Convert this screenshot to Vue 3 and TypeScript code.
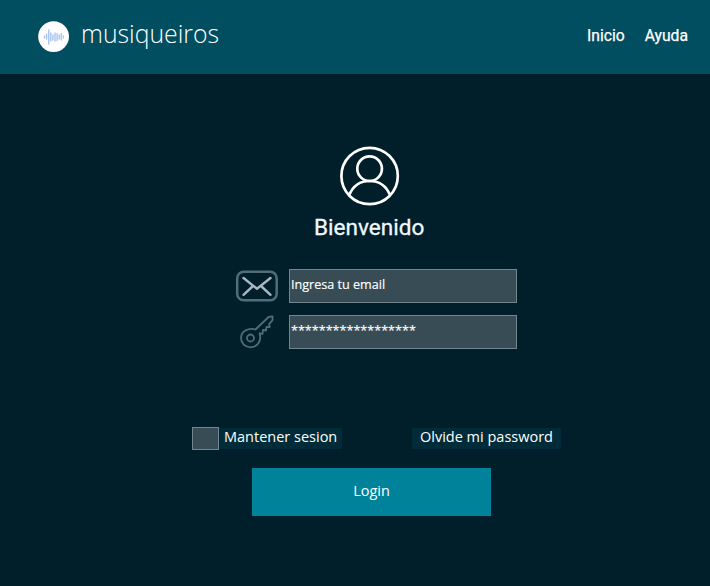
<script setup lang="ts">
import { ref } from 'vue'

const links: string[] = ['Inicio', 'Ayuda']
const email = ref('Ingresa tu email')
const password = ref('******************')
const keep = ref(false)
</script>

<template>
  <div class="page">
    <header class="bar">
      <div class="brand">
        <svg class="logo" width="32" height="32" viewBox="0 0 32 32">
          <circle cx="15.6" cy="15.6" r="15.4" fill="#fff" />
          <g stroke="#a9c3f3" stroke-width="1.4" stroke-linecap="round">
            <path d="M6.5 15v2M8.6 13v5M10.7 9v14M12.8 12v8M14.9 14v5M17 12v8M19.1 12.5v7M21.2 14v4M23.3 12.5v6.5M25.4 15v2" />
          </g>
        </svg>
        <span class="name">musiqueiros</span>
      </div>
      <nav class="nav">
        <a v-for="l in links" :key="l">{{ l }}</a>
      </nav>
    </header>
    <main class="main">
      <svg class="avatar" width="60" height="60" viewBox="0 0 60 60" fill="none" stroke="#fff" stroke-width="2.7">
        <circle cx="29.6" cy="30" r="28.2" />
        <circle cx="29.600" cy="22.700" r="12.300" />
        <path d="M9.200 49C13 40 20.500 35 29.600 35S46.200 40 50 49" />
      </svg>
      <h1 class="title">Bienvenido</h1>
      <form class="form" @submit.prevent>
        <div class="field">
          <svg class="icon" width="44" height="34" viewBox="0 0 44 34" fill="none">
            <rect x="2.200" y="2.700" width="39.500" height="28.600" rx="6.500" stroke="#526d78" stroke-width="2.500" />
            <path d="M8.500 9L22 19.800L35.500 9M8.500 25.800L18 17M35.500 25.800L26 17" stroke="#a9b8bf" stroke-width="2.400" stroke-linecap="round" />
          </svg>
          <div class="input email">{{ email }}</div>
        </div>
        <div class="field">
          <svg class="icon" width="44" height="34" viewBox="0 0 44 34" fill="none" stroke="#526c77" stroke-width="1.800" stroke-linejoin="round">
            <circle cx="15.500" cy="23" r="3.500" />
            <path d="M20.500 14.500L33.600 2L37.600 1.400L37.400 5.400L34.200 8.800L34.700 12.200L31.500 11.800L31 15.500L28 15L27.500 19L24.600 18.200C27 26 22 32.300 15.500 32.300C10.300 32.300 6 28.200 6 23C6 16.700 13 12.300 20.500 14.500Z" />
          </svg>
          <div class="input secret">{{ password }}</div>
        </div>
        <div class="options">
          <label class="keep" @click="keep = !keep">
            <span class="box"></span>
            <span class="tag keep-tag">Mantener sesion</span>
          </label>
          <a class="tag forgot">Olvide mi password</a>
        </div>
        <button class="login" type="submit">Login</button>
      </form>
    </main>
  </div>
</template>

<style>
body {
  background: #001f2b;
}
</style>

<style scoped>
.page {
  height: 586px;
  background: #001f2b;
  color: #fff;
  font-family: "Open Sans", sans-serif;
  overflow: hidden;
}
.bar {
  box-sizing: border-box;
  height: 74px;
  padding: 0 22px 0 38px;
  display: flex;
  justify-content: space-between;
  background: #004e60;
  border-bottom: 1px solid #1b464e;
}
.brand {
  display: flex;
  align-items: flex-start;
}
.logo {
  margin-top: 21px;
}
.name {
  margin: 15px 0 0 11px;
  font-size: 24.8px;
  line-height: 36px;
  font-weight: 300;
}
.nav {
  display: flex;
  gap: 20px;
  padding-top: 24px;
  font: 400 15.7px/24px Roboto, sans-serif;
  -webkit-text-stroke: 0.25px #fff;
}
.main {
  padding-top: 72px;
}
.avatar {
  display: block;
  margin-left: 340px;
}
.title {
  margin: 6px 0 0 314px;
  font: 400 22.6px/32px Roboto, sans-serif;
  color: #f0f8ff;
  -webkit-text-stroke: 0.3px #f0f8ff;
}
.form {
  padding-top: 25px;
}
.field {
  display: flex;
  gap: 10px;
  margin: 0 0 12px 235px;
  height: 34px;
}
.input {
  box-sizing: border-box;
  width: 228px;
  height: 34px;
  padding-left: 1px;
  background: #384c56;
  border: 1px solid #71868f;
  font-size: 12.6px;
  line-height: 30px;
  white-space: nowrap;
  -webkit-text-stroke: 0.15px #fff;
}
.options {
  display: flex;
  margin: 78px 0 0 192px;
  height: 23px;
}
.keep {
  display: flex;
  width: 220px;
}
.box {
  box-sizing: border-box;
  width: 27px;
  height: 23px;
  background: #384c56;
  border: 1px solid #71868f;
}
.tag {
  box-sizing: border-box;
  height: 21px;
  margin-top: 1px;
  background: #002c39;
  font-size: 14.5px;
  line-height: 18px;
  white-space: nowrap;
}
.keep-tag {
  width: 123px;
  padding-left: 5px;
}
.forgot {
  width: 149px;
  padding-left: 8px;
}
.login {
  display: block;
  width: 239px;
  height: 48px;
  margin: 18px 0 0 252px;
  padding: 0 0 3px;
  border: 0;
  background: #00829b;
  color: #fff;
  font: 14.5px/20px "Open Sans", sans-serif;
}
</style>
